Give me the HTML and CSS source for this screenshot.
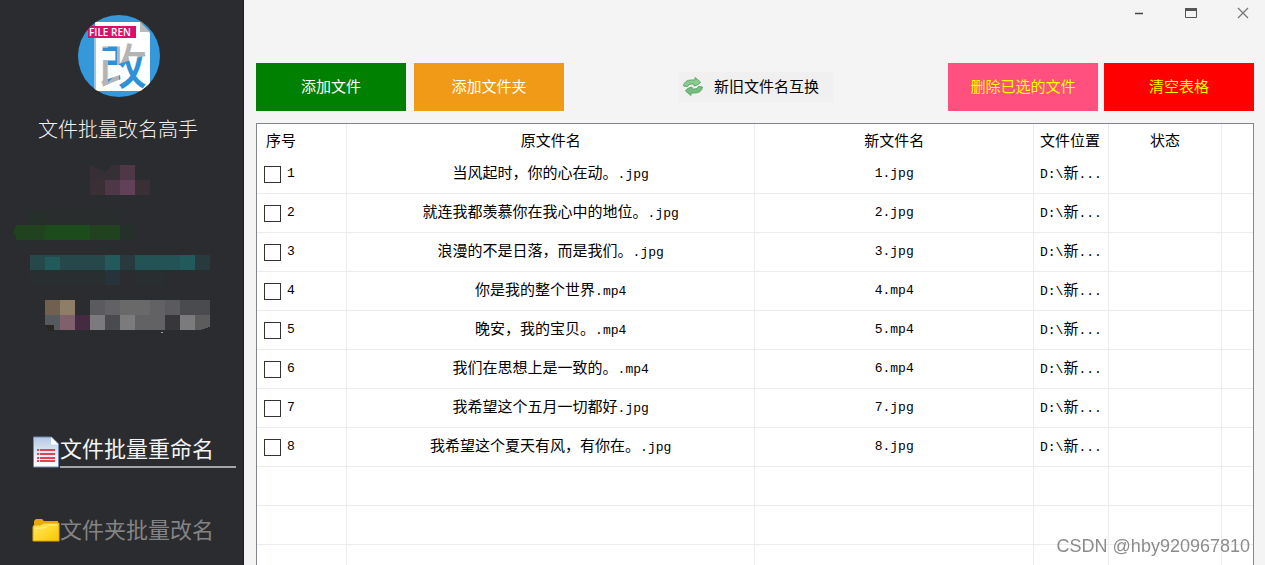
FILE: index.html
```html
<!DOCTYPE html>
<html lang="zh-CN">
<head>
<meta charset="utf-8">
<title>文件批量改名高手</title>
<link rel="stylesheet" href="styles.css">
</head>
<body>
<div class="app">
  <aside class="sidebar">
    <svg class="logo" viewBox="0 0 84 84" aria-hidden="true">
      <defs>
        <clipPath id="disc"><circle cx="42" cy="42" r="41"/></clipPath>
        <pattern id="ink" patternUnits="userSpaceOnUse" width="84" height="84">
          <rect width="84" height="84" fill="#b4b4b4"/>
          <path d="M20 34h11v-6h9v32l-9 8V47H20zM42 50l30-10v40H42z" fill="#2e90d6"/>
        </pattern>
      </defs>
      <g clip-path="url(#disc)">
        <rect width="84" height="84" fill="#3498db"/>
        <path d="M18 8h45l10 11v58H18z" fill="#fff"/>
        <path d="M17 24h2v53h-2z" fill="#9fc4dd"/>
        <path d="M63 8v10h10z" fill="#b9b9b9"/>
        <text class="logo-char" x="22" y="70" fill="url(#ink)">改</text>
        <rect x="11" y="12" width="48" height="12" fill="#d9106a"/>
        <text class="logo-tag" x="12" y="22" fill="#fff">FILE REN</text>
      </g>
    </svg>
    <h1 class="title">文件批量改名高手</h1>
    <svg class="mosaic" viewBox="0 0 244 180" shape-rendering="crispEdges" aria-hidden="true">
      <path fill="#363036" d="M90 0l15 7l8-7h7v15H90z"/>
      <path fill="#4e3848" d="M120 0h15v15h-15zM105 15h15v15h-15z"/>
      <path fill="#3b2f36" d="M90 15h15v15H90zM135 15h15v15h-15z"/>
      <path fill="#614157" d="M120 15h15v15h-15z"/>
      <path fill="#26302a" d="M30 45h15v15H30zM120 60h15v15h-15z"/>
      <path fill="#292d2e" d="M45 45h75v15H45zM17 75h32v6H17z"/>
      <path fill="#20421f" d="M14 63h2v-3h29v15H16v-5h-2zM90 60h30v15H90z"/>
      <path fill="#1c4c1c" d="M45 60h45v15H45z"/>
      <path fill="#26484b" d="M30 90h90v15H30z"/>
      <path fill="#225a5c" d="M45 92h15v13H45zM105 90h15v15h-15zM180 90h15v15h-15z"/>
      <path fill="#293a3f" d="M120 90h15v15h-15zM195 90h15v15h-15z"/>
      <path fill="#235355" d="M135 90h45v15h-45z"/>
      <path fill="#292f31" d="M30 105h75v15H30zM135 105h30v15h-30z"/>
      <path fill="#28323a" d="M105 105h15v15h-15z"/>
      <path fill="#715f50" d="M45 135h15v15H45z"/>
      <path fill="#8f7e67" d="M60 135h15v15H60z"/>
      <path fill="#5b5b5f" d="M90 135h15v15H90zM165 135h15v15h-15z"/>
      <path fill="#626265" d="M105 135h15v15h-15zM150 135h15v15h-15zM135 150h30v15h-30z"/>
      <path fill="#69696a" d="M120 135h30v15h-30z"/>
      <path fill="#4a4b4e" d="M180 135h30v15h-30zM105 150h15v15h-15z"/>
      <path fill="#545a5e" d="M45 150h15v15h-6l-9-4z"/>
      <path fill="#2c2623" d="M45 160h9v6h-6z"/>
      <path fill="#80606c" d="M60 150h15v15H60z"/>
      <path fill="#452b41" d="M75 150h15v15H75z"/>
      <path fill="#7b7b7d" d="M90 150h15v15H90zM120 150h15v15h-15zM180 150h15v15h-15z"/>
      <path fill="#37373b" d="M165 150h15v15h-15z"/>
      <path fill="#5c5c5c" d="M195 150h15v12l-10 3h-5z"/>
      <path fill="#a0a0a0" d="M161 167h2v1h-2z"/>
    </svg>
    <nav class="nav">
      <a class="nav-item nav-item-active" href="#files">
        <svg class="nav-icon" viewBox="0 0 28 32" aria-hidden="true">
          <defs><linearGradient id="page" x1="0" y1="0" x2="0" y2="1"><stop offset="0" stop-color="#b4c8e2"/><stop offset="0.7" stop-color="#eef3fa"/><stop offset="1" stop-color="#fff"/></linearGradient></defs>
          <path d="M1.500 1h18l7 7v23h-25z" fill="url(#page)" stroke="#6d89b5"/>
          <path d="M19 1l7.500 7.500H19z" fill="#fff"/>
          <path d="M8 14h15M8 18h15M8 22h15M8 25h15" stroke="#d9474f" stroke-width="2"/>
          <path d="M5 14h2M5 18h2M5 22h2M5 25h2" stroke="#d9474f" stroke-width="2"/>
        </svg>
        <span class="nav-text">文件批量重命名</span>
      </a>
      <a class="nav-item" href="#folders">
        <svg class="nav-icon" viewBox="0 0 28 32" aria-hidden="true">
          <defs><linearGradient id="gold" x1="0" y1="0" x2="1" y2="1"><stop offset="0" stop-color="#ffe36a"/><stop offset="0.5" stop-color="#ffd92e"/><stop offset="1" stop-color="#f7c400"/></linearGradient></defs>
          <path d="M2 8V4l2-2h6l2 2h14v8H1z" fill="#e8a80c"/>
          <path d="M1 24V10q0-2 3-2h4l4-2h15v18z" fill="url(#gold)" stroke="#e0a800"/>
          <path d="M3 11q10 1 14-3h8" stroke="#fff0a0" fill="none"/>
        </svg>
        <span class="nav-text">文件夹批量改名</span>
      </a>
    </nav>
  </aside>
  <main class="main">
    <header class="window-bar">
      <button class="window-button" type="button" aria-label="最小化"><svg viewBox="0 0 14 14" width="14" height="14"><path d="M3 7.500h8" stroke="#444" stroke-width="1.500"/></svg></button>
      <button class="window-button" type="button" aria-label="最大化"><svg viewBox="0 0 14 14" width="14" height="14"><path d="M1.500 2.500h11v9h-11zM1.500 4h11" fill="none" stroke="#555"/><path d="M1 2h12v3H1z" fill="#555"/></svg></button>
      <button class="window-button" type="button" aria-label="关闭"><svg viewBox="0 0 14 14" width="14" height="14"><path d="M2 2l10 10M12 2L2 12" stroke="#777" stroke-width="1.300"/></svg></button>
    </header>
    <div class="toolbar">
      <div class="group group-add">
        <button class="button add-file" type="button">添加文件</button>
        <button class="button add-folder" type="button">添加文件夹</button>
      </div>
      <button class="swap" type="button">
        <svg class="swap-icon" viewBox="0 0 22 22" aria-hidden="true">
          <path d="M1.500 10q1-6 8-6h3.500V1.500L18.500 6q-1 3-6.500 4V8H9q-2.500 0-3.500 2.500z" fill="#8ccb92" stroke="#5fa868"/>
          <path d="M20.500 11q-1 6-8 6H9v2.500L3.500 15q1-3 6.500-4v2h3q2.500 0 3.500-2.500z" fill="#78bd80" stroke="#5fa868"/>
        </svg>
        <span>新旧文件名互换</span>
      </button>
      <div class="group group-remove">
        <button class="button remove-selected" type="button">删除已选的文件</button>
        <button class="button clear" type="button">清空表格</button>
      </div>
    </div>
    <div class="table-frame">
      <table class="files">
        <colgroup><col class="col-index"><col class="col-old"><col><col class="col-path"><col class="col-state"><col class="col-rest"></colgroup>
        <thead>
          <tr><th class="index">序号</th><th>原文件名</th><th>新文件名</th><th class="path">文件位置</th><th>状态</th><th></th></tr>
        </thead>
        <tbody>
          <tr><td class="index"><label class="pick"><input class="box" type="checkbox"><span class="latin">1</span></label></td><td>当风起时，你的心在动。<span class="latin">.jpg</span></td><td class="latin">1.jpg</td><td class="path"><span class="latin">D:\</span>新<span class="latin">...</span></td><td></td><td></td></tr>
          <tr><td class="index"><label class="pick"><input class="box" type="checkbox"><span class="latin">2</span></label></td><td>就连我都羡慕你在我心中的地位。<span class="latin">.jpg</span></td><td class="latin">2.jpg</td><td class="path"><span class="latin">D:\</span>新<span class="latin">...</span></td><td></td><td></td></tr>
          <tr><td class="index"><label class="pick"><input class="box" type="checkbox"><span class="latin">3</span></label></td><td>浪漫的不是日落，而是我们。<span class="latin">.jpg</span></td><td class="latin">3.jpg</td><td class="path"><span class="latin">D:\</span>新<span class="latin">...</span></td><td></td><td></td></tr>
          <tr><td class="index"><label class="pick"><input class="box" type="checkbox"><span class="latin">4</span></label></td><td>你是我的整个世界<span class="latin">.mp4</span></td><td class="latin">4.mp4</td><td class="path"><span class="latin">D:\</span>新<span class="latin">...</span></td><td></td><td></td></tr>
          <tr><td class="index"><label class="pick"><input class="box" type="checkbox"><span class="latin">5</span></label></td><td>晚安，我的宝贝。<span class="latin">.mp4</span></td><td class="latin">5.mp4</td><td class="path"><span class="latin">D:\</span>新<span class="latin">...</span></td><td></td><td></td></tr>
          <tr><td class="index"><label class="pick"><input class="box" type="checkbox"><span class="latin">6</span></label></td><td>我们在思想上是一致的。<span class="latin">.mp4</span></td><td class="latin">6.mp4</td><td class="path"><span class="latin">D:\</span>新<span class="latin">...</span></td><td></td><td></td></tr>
          <tr><td class="index"><label class="pick"><input class="box" type="checkbox"><span class="latin">7</span></label></td><td>我希望这个五月一切都好<span class="latin">.jpg</span></td><td class="latin">7.jpg</td><td class="path"><span class="latin">D:\</span>新<span class="latin">...</span></td><td></td><td></td></tr>
          <tr><td class="index"><label class="pick"><input class="box" type="checkbox"><span class="latin">8</span></label></td><td>我希望这个夏天有风，有你在。<span class="latin">.jpg</span></td><td class="latin">8.jpg</td><td class="path"><span class="latin">D:\</span>新<span class="latin">...</span></td><td></td><td></td></tr>
          <tr><td></td><td></td><td></td><td></td><td></td><td></td></tr>
          <tr><td></td><td></td><td></td><td></td><td></td><td></td></tr>
          <tr><td></td><td></td><td></td><td></td><td></td><td></td></tr>
        </tbody>
      </table>
    </div>
  </main>
</div>
<div class="watermark">CSDN @hby920967810</div>
</body>
</html>
```
FILE: styles.css
```css
* { box-sizing: border-box; }
body {
  margin: 0;
  background: #f4f4f4;
  color: #000;
  font: 15px/20px "Liberation Sans", "Noto Sans CJK SC", sans-serif;
}
button { border: 0; padding: 0; font: inherit; }
.app { display: flex; height: 100vh; overflow: hidden; }

.sidebar {
  display: flex;
  flex-direction: column;
  flex: none;
  width: 244px;
  padding-top: 14px;
  background: #2b2c30;
  border-right: 1px solid #1d1e20;
}
.logo { display: block; flex: none; width: 84px; height: 84px; margin-left: 77px; }
.logo-char { font: 500 48px "Noto Sans CJK SC", sans-serif; }
.logo-tag { font: 600 10px "Open Sans", sans-serif; }
.title {
  margin: 17px 0 0 38px;
  color: #f2f2f2;
  font-size: 20px;
  font-weight: 300;
  line-height: 30px;
}
.mosaic { display: block; flex: none; width: 244px; height: 180px; margin-top: 20px; }
.nav { display: flex; flex-direction: column; gap: 47px; margin-top: 89px; padding-left: 32px; }
.nav-item { display: flex; align-items: flex-start; color: #848484; text-decoration: none; }
.nav-icon { flex: none; width: 28px; height: 32px; margin-top: 2px; }
.nav-text { flex: none; width: 176px; height: 34px; font-size: 22px; line-height: 32px; }
.nav-item-active { color: #f4f4f4; }
.nav-item-active .nav-text { border-bottom: 2px solid #a5a5a5; }

.main { display: flex; flex-direction: column; flex: 1; min-width: 0; padding: 0 11px 0 12px; }
.window-bar { display: flex; justify-content: flex-end; gap: 38px; height: 63px; padding: 6px 4px 0 0; }
.window-button { width: 14px; height: 14px; background: none; }
.window-button svg { display: block; }
.toolbar { display: flex; align-items: center; justify-content: space-between; height: 48px; }
.group { display: flex; }
.group-add { gap: 8px; }
.group-remove { gap: 6px; }
.button { width: 150px; height: 48px; color: #fff; }
.add-file { background: #008000; }
.add-folder { background: #f09a18; }
.remove-selected { background: #ff5080; color: #ff0; }
.clear { background: #f00; color: #ff0; }
.swap { display: flex; align-items: center; gap: 10px; width: 154px; height: 30px; padding-left: 3px; background: #f0f0f0; color: #000; }
.swap-icon { width: 22px; height: 22px; }

.table-frame {
  flex: 1;
  min-height: 0;
  margin-top: 12px;
  overflow: hidden;
  border: solid #82878f;
  border-width: 1px 1px 0;
  background: #fff;
}
.files { width: 100%; table-layout: fixed; border-collapse: separate; border-spacing: 0; }
.col-index { width: 90px; }
.col-old { width: 41%; }
.col-path { width: 75px; }
.col-state { width: 113px; }
.col-rest { width: 31px; }
.files th, .files td { padding: 0; border-right: 1px solid #ececec; text-align: center; white-space: nowrap; }
.files th:last-child, .files td:last-child { border-right: 0; }
.files th { height: 31px; padding-top: 3px; font-weight: 400; }
.files td { height: 39px; border-bottom: 1px solid #ececec; }
.files .index { padding-left: 7px; text-align: left; }
.files th.index { padding-left: 9px; }
.files .path { padding-left: 6px; text-align: left; }
.files .latin { font-family: "Liberation Mono", monospace; font-size: 13px; }
.pick { display: flex; align-items: center; gap: 6px; }
.box { appearance: none; width: 17px; height: 17px; margin: 0; border: 1px solid #333; background: #fff; }
.box:checked { background: #333; }

.watermark {
  position: fixed;
  right: 15px;
  bottom: 8px;
  color: #8c8c8c;
  font-size: 18px;
  line-height: 22px;
}
```
